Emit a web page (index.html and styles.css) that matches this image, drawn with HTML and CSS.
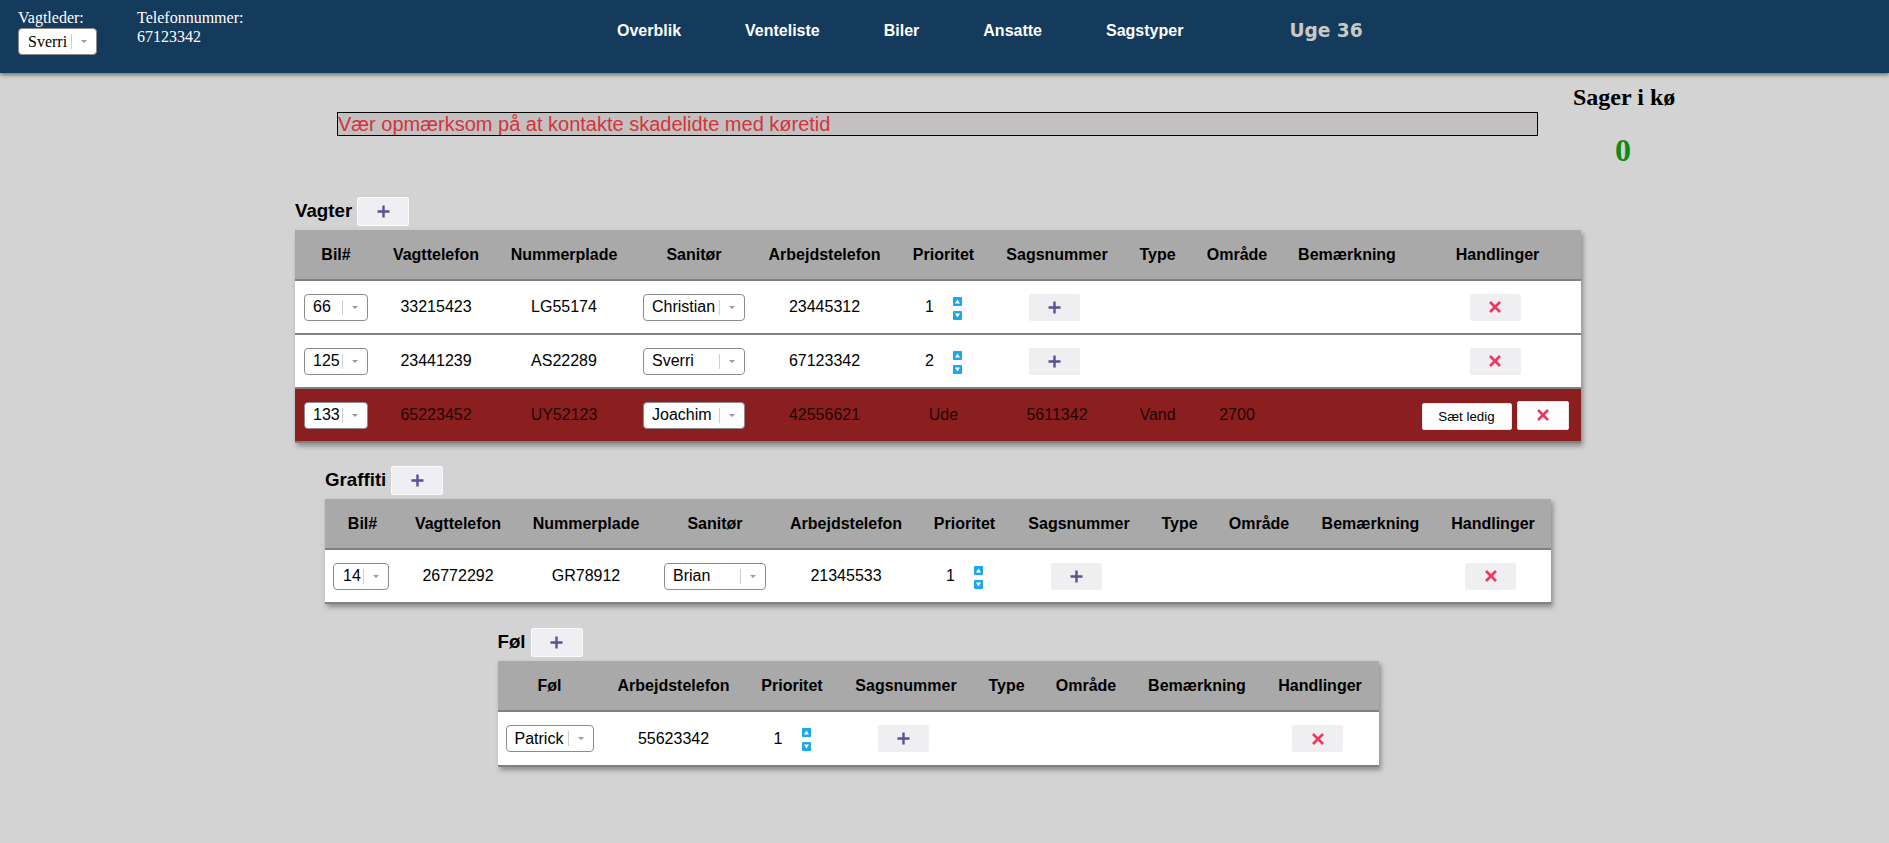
FILE: index.html
```html
<!DOCTYPE html>
<html lang="da">
<head>
<meta charset="utf-8">
<title>Overblik</title>
<link rel="stylesheet" href="styles.css">
</head>
<body>
<header class="topbar">
  <div class="hfield">
    <div class="hlabel">Vagtleder:</div>
    <div class="sel sel-head"><span class="sel-val">Sverri</span><span class="sel-sep"></span><span class="sel-arr"></span></div>
  </div>
  <div class="hfield hphone">
    <div class="hlabel">Telefonnummer:</div>
    <div class="hnum">67123342</div>
  </div>
  <nav class="nav">
    <a href="#">Overblik</a>
    <a href="#">Venteliste</a>
    <a href="#">Biler</a>
    <a href="#">Ansatte</a>
    <a href="#">Sagstyper</a>
  </nav>
  <div class="week">Uge 36</div>
</header>

<div class="top">
  <div class="alert">Vær opmærksom på at kontakte skadelidte med køretid</div>
  <div class="queue">
    <h2 class="queue-title">Sager i kø</h2>
    <h1 class="queue-count">0</h1>
  </div>
</div>

<main class="content">
  <section class="section">
    <div class="sec-head"><h3 class="sec-title">Vagter</h3><button class="add-btn"><svg class="ico" width="13" height="13" viewBox="0 0 13 13"><path d="M6.5 0.5V12.5M0.5 6.5H12.5" stroke="#5b4f95" stroke-width="2.4"/></svg></button></div>
    <table class="grid grid-vagter">
      <colgroup>
        <col class="cv1"><col class="cv2"><col class="cv3"><col class="cv4"><col class="cv5"><col class="cv6"><col class="cv7"><col class="cv8"><col class="cv9"><col class="cv10"><col class="cv11">
      </colgroup>
      <thead>
        <tr><th>Bil#</th><th>Vagttelefon</th><th>Nummerplade</th><th>Sanitør</th><th>Arbejdstelefon</th><th>Prioritet</th><th>Sagsnummer</th><th>Type</th><th>Område</th><th>Bemærkning</th><th>Handlinger</th></tr>
      </thead>
      <tbody>
        <tr>
          <td><div class="sel sel-bil"><span class="sel-val">66</span><span class="sel-sep"></span><span class="sel-arr"></span></div></td>
          <td>33215423</td>
          <td>LG55174</td>
          <td><div class="sel sel-name"><span class="sel-val">Christian</span><span class="sel-sep"></span><span class="sel-arr"></span></div></td>
          <td>23445312</td>
          <td><div class="prio"><span class="prio-num">1</span><svg class="arrows" width="9" height="23" viewBox="0 0 9 23"><rect width="9" height="9" rx="1" fill="#1fa5ea"/><path d="M2 6.6L4.5 2.6L7 6.6Z" fill="#fff"/><rect y="14" width="9" height="9" rx="1" fill="#1fa5ea"/><path d="M2 16.4L7 16.4L4.5 20.4Z" fill="#fff"/></svg></div></td>
          <td><button class="row-btn"><svg class="ico" width="13" height="13" viewBox="0 0 13 13"><path d="M6.5 0.5V12.5M0.5 6.5H12.5" stroke="#5b4f95" stroke-width="2.4"/></svg></button></td>
          <td></td>
          <td></td>
          <td></td>
          <td><button class="row-btn"><svg class="ico" width="12" height="12" viewBox="0 0 12 12"><path d="M1 1L11 11M11 1L1 11" stroke="#f0365c" stroke-width="2.6"/></svg></button></td>
        </tr>
        <tr>
          <td><div class="sel sel-bil"><span class="sel-val">125</span><span class="sel-sep"></span><span class="sel-arr"></span></div></td>
          <td>23441239</td>
          <td>AS22289</td>
          <td><div class="sel sel-name"><span class="sel-val">Sverri</span><span class="sel-sep"></span><span class="sel-arr"></span></div></td>
          <td>67123342</td>
          <td><div class="prio"><span class="prio-num">2</span><svg class="arrows" width="9" height="23" viewBox="0 0 9 23"><rect width="9" height="9" rx="1" fill="#1fa5ea"/><path d="M2 6.6L4.5 2.6L7 6.6Z" fill="#fff"/><rect y="14" width="9" height="9" rx="1" fill="#1fa5ea"/><path d="M2 16.4L7 16.4L4.5 20.4Z" fill="#fff"/></svg></div></td>
          <td><button class="row-btn"><svg class="ico" width="13" height="13" viewBox="0 0 13 13"><path d="M6.5 0.5V12.5M0.5 6.5H12.5" stroke="#5b4f95" stroke-width="2.4"/></svg></button></td>
          <td></td>
          <td></td>
          <td></td>
          <td><button class="row-btn"><svg class="ico" width="12" height="12" viewBox="0 0 12 12"><path d="M1 1L11 11M11 1L1 11" stroke="#f0365c" stroke-width="2.6"/></svg></button></td>
        </tr>
        <tr class="busy">
          <td><div class="sel sel-bil"><span class="sel-val">133</span><span class="sel-sep"></span><span class="sel-arr"></span></div></td>
          <td>65223452</td>
          <td>UY52123</td>
          <td><div class="sel sel-name"><span class="sel-val">Joachim</span><span class="sel-sep"></span><span class="sel-arr"></span></div></td>
          <td>42556621</td>
          <td>Ude</td>
          <td>5611342</td>
          <td>Vand</td>
          <td>2700</td>
          <td></td>
          <td><div class="actions"><button class="free-btn">Sæt ledig</button><button class="del-btn"><svg class="ico" width="12" height="12" viewBox="0 0 12 12"><path d="M1 1L11 11M11 1L1 11" stroke="#f0365c" stroke-width="2.6"/></svg></button></div></td>
        </tr>
      </tbody>
    </table>
  </section>

  <section class="section">
    <div class="sec-head"><h3 class="sec-title">Graffiti</h3><button class="add-btn"><svg class="ico" width="13" height="13" viewBox="0 0 13 13"><path d="M6.5 0.5V12.5M0.5 6.5H12.5" stroke="#5b4f95" stroke-width="2.4"/></svg></button></div>
    <table class="grid grid-graffiti">
      <colgroup>
        <col class="cg1"><col class="cg2"><col class="cg3"><col class="cg4"><col class="cg5"><col class="cg6"><col class="cg7"><col class="cg8"><col class="cg9"><col class="cg10"><col class="cg11">
      </colgroup>
      <thead>
        <tr><th>Bil#</th><th>Vagttelefon</th><th>Nummerplade</th><th>Sanitør</th><th>Arbejdstelefon</th><th>Prioritet</th><th>Sagsnummer</th><th>Type</th><th>Område</th><th>Bemærkning</th><th>Handlinger</th></tr>
      </thead>
      <tbody>
        <tr>
          <td><div class="sel sel-bil-s"><span class="sel-val">14</span><span class="sel-sep"></span><span class="sel-arr"></span></div></td>
          <td>26772292</td>
          <td>GR78912</td>
          <td><div class="sel sel-name"><span class="sel-val">Brian</span><span class="sel-sep"></span><span class="sel-arr"></span></div></td>
          <td>21345533</td>
          <td><div class="prio"><span class="prio-num">1</span><svg class="arrows" width="9" height="23" viewBox="0 0 9 23"><rect width="9" height="9" rx="1" fill="#1fa5ea"/><path d="M2 6.6L4.5 2.6L7 6.6Z" fill="#fff"/><rect y="14" width="9" height="9" rx="1" fill="#1fa5ea"/><path d="M2 16.4L7 16.4L4.5 20.4Z" fill="#fff"/></svg></div></td>
          <td><button class="row-btn"><svg class="ico" width="13" height="13" viewBox="0 0 13 13"><path d="M6.5 0.5V12.5M0.5 6.5H12.5" stroke="#5b4f95" stroke-width="2.4"/></svg></button></td>
          <td></td>
          <td></td>
          <td></td>
          <td><button class="row-btn"><svg class="ico" width="12" height="12" viewBox="0 0 12 12"><path d="M1 1L11 11M11 1L1 11" stroke="#f0365c" stroke-width="2.6"/></svg></button></td>
        </tr>
      </tbody>
    </table>
  </section>

  <section class="section section-fol">
    <div class="sec-head"><h3 class="sec-title">Føl</h3><button class="add-btn"><svg class="ico" width="13" height="13" viewBox="0 0 13 13"><path d="M6.5 0.5V12.5M0.5 6.5H12.5" stroke="#5b4f95" stroke-width="2.4"/></svg></button></div>
    <table class="grid grid-fol">
      <colgroup>
        <col class="cf1"><col class="cf2"><col class="cf3"><col class="cf4"><col class="cf5"><col class="cf6"><col class="cf7"><col class="cf8">
      </colgroup>
      <thead>
        <tr><th>Føl</th><th>Arbejdstelefon</th><th>Prioritet</th><th>Sagsnummer</th><th>Type</th><th>Område</th><th>Bemærkning</th><th>Handlinger</th></tr>
      </thead>
      <tbody>
        <tr>
          <td><div class="sel sel-fol"><span class="sel-val">Patrick</span><span class="sel-sep"></span><span class="sel-arr"></span></div></td>
          <td>55623342</td>
          <td><div class="prio"><span class="prio-num">1</span><svg class="arrows" width="9" height="23" viewBox="0 0 9 23"><rect width="9" height="9" rx="1" fill="#1fa5ea"/><path d="M2 6.6L4.5 2.6L7 6.6Z" fill="#fff"/><rect y="14" width="9" height="9" rx="1" fill="#1fa5ea"/><path d="M2 16.4L7 16.4L4.5 20.4Z" fill="#fff"/></svg></div></td>
          <td><button class="row-btn"><svg class="ico" width="13" height="13" viewBox="0 0 13 13"><path d="M6.5 0.5V12.5M0.5 6.5H12.5" stroke="#5b4f95" stroke-width="2.4"/></svg></button></td>
          <td></td>
          <td></td>
          <td></td>
          <td><button class="row-btn"><svg class="ico" width="12" height="12" viewBox="0 0 12 12"><path d="M1 1L11 11M11 1L1 11" stroke="#f0365c" stroke-width="2.6"/></svg></button></td>
        </tr>
      </tbody>
    </table>
  </section>
</main>
</body>
</html>
```

FILE: styles.css
```css
html, body {
  margin: 0;
  padding: 0;
}
body {
  background: #d3d3d3;
  font-family: "Liberation Serif", "Times New Roman", serif;
  font-size: 16px;
  color: #000;
  min-height: 843px;
}

/* ---------- top bar ---------- */
.topbar {
  display: flex;
  align-items: flex-start;
  height: 73px;
  box-sizing: border-box;
  padding-left: 18px;
  background: #143a5c;
  color: #fff;
  box-shadow: 0 2px 4px rgba(0, 0, 0, 0.45);
  position: relative;
  z-index: 1;
}
.hfield {
  padding-top: 9px;
}
.hlabel {
  line-height: 18px;
}
.hphone {
  margin-left: 40px;
  width: 110px;
}
.hnum {
  line-height: 18px;
  margin-top: 1px;
}
.nav {
  display: flex;
  gap: 64px;
  margin-left: 370px;
  margin-top: 22px;
}
.nav a {
  color: #fff;
  text-decoration: none;
  font-family: "Liberation Sans", Arial, sans-serif;
  font-weight: bold;
  font-size: 16px;
  line-height: 18px;
}
.week {
  margin-left: 106px;
  margin-top: 20px;
  color: #c9c9c9;
  font-family: "DejaVu Sans", Verdana, sans-serif;
  font-weight: bold;
  font-size: 18.6px;
  line-height: 21px;
}

/* ---------- custom select ---------- */
.sel {
  display: inline-flex;
  align-items: center;
  box-sizing: border-box;
  height: 27px;
  border: 1px solid #8c8c8c;
  border-radius: 4px;
  background: #fff;
  color: #000;
  vertical-align: middle;
}
.sel-val {
  flex: 1;
  padding-left: 8px;
  text-align: left;
  white-space: nowrap;
  overflow: hidden;
}
.sel-sep {
  width: 1px;
  height: 15px;
  background: #cfcfcf;
}
.sel-arr {
  width: 24px;
  display: flex;
  justify-content: center;
  align-items: center;
}
.sel-arr::before {
  content: "";
  border-left: 3px solid transparent;
  border-right: 3px solid transparent;
  border-top: 3px solid #9a9a9a;
}
.sel-head {
  width: 79px;
  margin-top: 1px;
  font-family: "Liberation Serif", "Times New Roman", serif;
}
.sel-head .sel-val {
  padding-left: 9px;
}
.sel-bil { width: 64px; }
.sel-bil-s { width: 56px; margin-right: 3px; }
.sel-bil-s .sel-val { padding-left: 9px; }
.sel-name { width: 102px; }
.sel-fol { width: 88px; }

/* ---------- top row ---------- */
.top {
  display: flex;
  align-items: flex-start;
  padding-left: 337px;
  padding-top: 10px;
}
.alert {
  width: 1201px;
  box-sizing: border-box;
  margin-top: 29px;
  border: 1px solid #000;
  background: #c2c0c0;
  color: #d3343a;
  font-family: "Liberation Sans", Arial, sans-serif;
  font-size: 20px;
  line-height: 22px;
  white-space: nowrap;
}
.queue {
  margin-left: 35px;
  width: 100px;
  text-align: center;
}
.queue-title {
  margin: 0;
  font-size: 24px;
  font-weight: bold;
  line-height: 28px;
  white-space: nowrap;
}
.queue-count {
  margin: 21px 0 0;
  font-size: 32px;
  font-weight: bold;
  line-height: 37px;
  color: #118a11;
}

/* ---------- sections ---------- */
.content {
  width: 1876px;
  padding-top: 28px;
  font-family: "Liberation Sans", Arial, sans-serif;
}
.section {
  width: fit-content;
  margin: 0 auto 23px;
}
.section-fol {
  padding-top: 1px;
}
.sec-head {
  display: flex;
  align-items: center;
  gap: 5px;
  margin-bottom: 4px;
}
.sec-title {
  margin: 0;
  font-size: 18.72px;
  font-weight: bold;
  line-height: 21px;
  padding-bottom: 2px;
}
.add-btn {
  width: 52px;
  height: 29px;
  box-sizing: border-box;
  border: 1px solid #fafafa;
  border-radius: 2px;
  background: #efeef2;
  padding: 0;
  display: flex;
  align-items: center;
  justify-content: center;
}
.ico {
  display: block;
}

/* ---------- tables ---------- */
.grid {
  border-collapse: collapse;
  table-layout: fixed;
  background: #fff;
  box-shadow: 2px 3px 5px rgba(0, 0, 0, 0.35);
  font-size: 16px;
}
.grid-vagter { width: 1286px; }
.grid-graffiti { width: 1226px; }
.grid-fol { width: 881px; }
.grid th {
  background: #a9a9a9;
  height: 49px;
  padding: 0;
  font-weight: bold;
  text-align: center;
  vertical-align: middle;
  border-bottom: 2px solid #808080;
  white-space: nowrap;
}
.grid td {
  height: 52px;
  padding: 0;
  text-align: center;
  vertical-align: middle;
  border-bottom: 2px solid #808080;
  white-space: nowrap;
}
.grid-fol td {
  height: 53px;
}
.grid tr.busy td {
  background: #8b1e1f;
  color: #1e0606;
}

.cv1 { width: 82px; }
.cv2 { width: 118px; }
.cv3 { width: 138px; }
.cv4 { width: 122px; }
.cv5 { width: 139px; }
.cv6 { width: 99px; }
.cv7 { width: 128px; }
.cv8 { width: 73px; }
.cv9 { width: 86px; }
.cv10 { width: 134px; }
.cv11 { width: 167px; }

.cg1 { width: 75px; }
.cg2 { width: 116px; }
.cg3 { width: 140px; }
.cg4 { width: 118px; }
.cg5 { width: 144px; }
.cg6 { width: 93px; }
.cg7 { width: 136px; }
.cg8 { width: 65px; }
.cg9 { width: 94px; }
.cg10 { width: 129px; }
.cg11 { width: 116px; }

.cf1 { width: 104px; }
.cf2 { width: 144px; }
.cf3 { width: 93px; }
.cf4 { width: 135px; }
.cf5 { width: 66px; }
.cf6 { width: 93px; }
.cf7 { width: 129px; }
.cf8 { width: 117px; }

.prio {
  display: inline-flex;
  align-items: center;
  gap: 19px;
  vertical-align: middle;
}
.prio-num {
  display: inline-block;
  width: 9px;
}
.arrows {
  display: block;
  margin-top: 2px;
}

.row-btn {
  width: 51px;
  height: 27px;
  padding: 0;
  border: 0;
  border-radius: 2px;
  background: #efeff1;
  display: inline-flex;
  align-items: center;
  justify-content: center;
  vertical-align: middle;
  margin-right: 5px;
}
.actions {
  display: inline-flex;
  align-items: flex-end;
  gap: 5px;
  vertical-align: middle;
  margin-right: 5px;
}
.free-btn {
  width: 90px;
  height: 27px;
  padding: 0;
  border: 1px solid #e6e6e6;
  border-radius: 2px;
  background: #fff;
  font-family: "Liberation Sans", Arial, sans-serif;
  font-size: 13.33px;
  color: #000;
}
.del-btn {
  width: 52px;
  height: 29px;
  padding: 0;
  border: 1px solid #e6e6e6;
  border-radius: 2px;
  background: #fff;
  display: inline-flex;
  align-items: center;
  justify-content: center;
}
```
